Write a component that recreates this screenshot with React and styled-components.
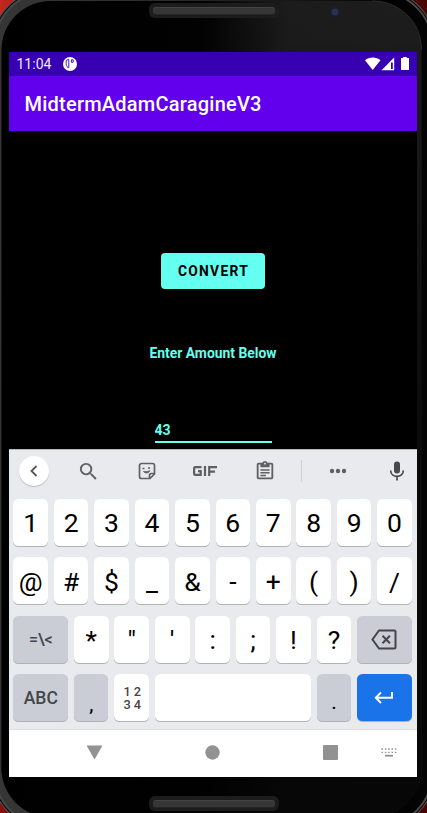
import React from "react";
import styled, { createGlobalStyle } from "styled-components";

const Global = createGlobalStyle`
  *{box-sizing:border-box}
  body{margin:0;background:#000;overflow:hidden}
  button,input{font-family:inherit;border:0;padding:0;margin:0;outline:0}
`;
const Desktop = styled.div`
  position:relative;width:427px;height:813px;overflow:hidden;
  font-family:Roboto,sans-serif;
  background:linear-gradient(100deg,#c5281f 0,#a51813 30px,#4a0505 350px,#4a0303 100%);
`;
const Body = styled.svg`position:absolute;inset:0;width:427px;height:813px;`;
const Phone = styled.div`
  position:relative;display:flex;flex-direction:column;align-items:center;
  width:427px;height:813px;padding-right:1px;
`;
const Speaker = styled.div`
  flex:none;width:130px;height:15px;border-radius:6px;background:#1c1c1c;padding:4px;
  margin-top:${p => p.$top}px;margin-left:2px;
  &::before{content:"";display:block;height:6px;border-radius:3px;background:#363636;border-top:1px solid #444;border-bottom:1px solid #252525}
`;
const Screen = styled.main`
  flex:none;width:408px;height:725px;margin-top:34px;display:flex;flex-direction:column;background:#000;
`;
const StatusBar = styled.div`
  height:23.5px;flex:none;background:#3700b3;color:#fff;display:flex;align-items:center;padding:0 7px 0 7.5px;font-size:14px;
  svg{display:block;flex:none}
`;
const Clock = styled.span`width:46px;color:#eee8fa;position:relative;top:.5px;`;
const StatusIcons = styled.div`display:flex;align-items:center;margin-left:auto;`;
const AppBar = styled.header`
  height:55.5px;flex:none;background:#6200ee;color:#fff;display:flex;align-items:center;padding:2px 0 0 15.5px;
  font-size:20px;font-weight:500;letter-spacing:.23px;
`;
const Content = styled.section`
  height:318px;flex:none;display:flex;flex-direction:column;align-items:center;color:#64ffef;
`;
const Convert = styled.button`
  margin-top:121.5px;width:104px;height:36.5px;border-radius:4px;background:#64fff0;color:#000;
  font-size:13.8px;font-weight:700;letter-spacing:1.3px;padding:0 0 0 1px;
`;
const Label = styled.label`margin-top:54.5px;height:18px;line-height:18px;font-size:13.9px;font-weight:700;`;
const Field = styled.input`
  margin:57.5px 0 0 0;width:117px;height:24px;background:transparent;color:#64ffef;
  border-bottom:2.5px solid #64ffef;font-size:14px;font-weight:700;padding-bottom:0;
`;
const Keyboard = styled.section`
  height:281px;flex:none;background:#e8eaed;border-top:1px solid #b8b9bb;border-bottom:1px solid #dcdee1;color:#000;
`;
const Toolbar = styled.div`
  height:49px;display:grid;grid-template-columns:49px 60px 58px 57px 63px 10px 63px 56px;align-items:center;justify-items:center;color:#5f6061;
  padding-bottom:7px;
  svg{display:block}
`;
const Back = styled.button`
  width:30px;height:30px;border-radius:50%;background:#fff;color:#555;display:grid;place-items:center;box-shadow:0 1px 1px #b8babd;
`;
const Divider = styled.i`width:1px;height:22px;background:#cfd1d4;`;
const Row = styled.div`
  display:flex;gap:5.8px;padding:0 5.2px 0 4.4px;height:47px;margin-bottom:11.4px;
`;
const fills = { plain: "#fff", mod: "#cacdd5", enter: "#1a73e8" };
const Key = styled.button`
  flex:${p => p.$w ? `0 0 ${p.$w}px` : "1 1 0"};min-width:0;height:47px;border-radius:5.5px;
  background:${p => fills[p.$kind || "plain"]};
  color:${p => p.$kind === "enter" ? "#fff" : p.$muted ? "#444548" : "#000"};
  box-shadow:0 1px 0 #b0b2b6;
  font-size:${p => p.$size || 26.5}px;font-weight:${p => p.$muted ? 500 : 400};
  display:flex;align-items:center;justify-content:center;line-height:1;
  padding-top:${p => p.$drop || 2}px;
  svg{display:block;margin-top:-1px}
`;
const NumPad = styled.span`
  display:grid;grid-template-columns:10.5px 10px;line-height:13px;font-size:12.8px;margin:-2px 0 0 1px;
`;
const NavBar = styled.nav`
  flex:1;background:#fff;color:#929292;display:grid;grid-template-columns:171px 65px 171px;align-items:center;padding-bottom:2px;
`;
const NavSlot = styled.div`display:flex;width:100%;align-items:center;padding-left:${p => p.$left}px;gap:${p => p.$gap || 0}px;svg{display:block;flex:none}`;

const Frame = () => (
  <Body viewBox="0 0 427 813">
    <defs>
      <linearGradient id="face" x1="0" x2="1">
        <stop offset="0" stopColor="#000" /><stop offset=".48" stopColor="#020202" />
        <stop offset=".68" stopColor="#1c1c1c" /><stop offset="1" stopColor="#1d1d1d" />
      </linearGradient>
      <linearGradient id="fade" x1="0" y1="0" x2="0" y2="1">
        <stop offset="0" stopColor="#000" stopOpacity="0" /><stop offset=".15" stopColor="#000" stopOpacity=".15" />
        <stop offset=".55" stopColor="#000" stopOpacity=".65" /><stop offset="1" stopColor="#000" stopOpacity=".75" />
      </linearGradient>
      <linearGradient id="rim" x1="0" x2="1">
        <stop offset="0" stopColor="#363636" /><stop offset=".3" stopColor="#303030" />
        <stop offset=".7" stopColor="#161616" /><stop offset=".9" stopColor="#020202" /><stop offset="1" stopColor="#050505" />
      </linearGradient>
    </defs>
    <rect x="-9" y="-12" width="445" height="842" rx="59" fill="#555" />
    <rect x="-8" y="-11" width="443" height="840" rx="58" fill="#080808" />
    <rect x="-7" y="-10" width="441" height="838" rx="57" fill="#484848" />
    <rect x="-5" y="-8" width="437" height="834" rx="55" fill="url(#rim)" />
    <rect x="1.500" y="1" width="420" height="816" rx="49" fill="url(#face)" />
    <rect x="1.500" y="1" width="420" height="816" rx="49" fill="url(#fade)" />
    <path d="M372 1C400 1 421.500 22 421.500 50" fill="none" stroke="#333" strokeWidth=".8" />
    <circle cx="335" cy="12" r="6" fill="#1b1d27" /><circle cx="335" cy="12" r="3.500" fill="#2a3150" />
  </Body>
);

const Glyph = ({ s = 20, d }) => <svg width={s} height={s} viewBox="0 0 24 24" fill="currentColor"><path d={d} /></svg>;

export default function App() {
  return (
    <Desktop>
      <Global />
      <Frame />
      <Phone>
        <Speaker $top={3} />
        <Screen>
          <StatusBar>
            <Clock>11:04</Clock>
            <svg width="14" height="14" viewBox="0 0 14 14"><circle cx="7" cy="7" r="7" fill="#fff" /><path d="M5.800 2.500v8.300C3 10.500 2.600 5 3.600 3ZM8.500 2.800h1.700v2.500H8.500Z" fill="none" stroke="#3700b3" strokeWidth=".9" /></svg>
            <StatusIcons>
              <svg width="45" height="14" viewBox="0 0 45 14" fill="#fff">
                <path d="M0 3.200C4-.5 11.500-.5 15.500 3.200L7.700 13Z" />
                <path d="M16.500 13.200 29.200.5v12.700Z" /><path d="M26 5.500h1.800v6.500H26Z" fill="#3700b3" />
                <path d="M38.200 0h3.600v1H44v12h-8V1h2.200Z" />
              </svg>
            </StatusIcons>
          </StatusBar>
          <AppBar>MidtermAdamCaragineV3</AppBar>
          <Content>
            <Convert>CONVERT</Convert>
            <Label htmlFor="amount">Enter Amount Below</Label>
            <Field id="amount" defaultValue="43" />
          </Content>
          <Keyboard>
            <Toolbar>
              <Back><svg width="10" height="12" viewBox="0 0 10 12" fill="none" stroke="currentColor" strokeWidth="1.800"><path d="M7.500 1 2.500 6l5 5" /></svg></Back>
              <Glyph s={23} d="M15.500 14h-.79l-.28-.27A6.470 6.470 0 0 0 16 9.500 6.500 6.500 0 1 0 9.500 16c1.610 0 3.090-.59 4.230-1.570l.27.28v.79l5 4.990L20.490 19zm-6 0C7.010 14 5 11.990 5 9.500S7.010 5 9.500 5 14 7.010 14 9.500 11.990 14 9.500 14" />
              <svg width="18" height="18" viewBox="0 0 18 18" fill="none" stroke="currentColor" strokeWidth="1.700"><path d="M3.500 1.500h11a2 2 0 0 1 2 2v8.500l-4.500 4.500H3.500a2 2 0 0 1-2-2v-11a2 2 0 0 1 2-2ZM16 11.500h-2.500a2 2 0 0 0-2 2V16" /><path d="M5.500 9.500c1.500 2.200 5.200 2 6.500-.8-2 .8-4 1-6.500.8Z" fill="currentColor" strokeWidth=".8" /><path d="M4.500 6.500h2M10 6h2" /></svg>
              <svg width="24" height="10" viewBox="0 0 24 10" fill="none" stroke="currentColor" strokeWidth="2.200"><path d="M8.500 1.100H2.300Q1.100 1.100 1.100 2.300v5.400Q1.100 8.900 2.300 8.900H7.700V5.200H5M12 0v10M16.200 10V1.100H24M16.200 5.600H22" /></svg>
              <Glyph s={22} d="M19 3h-4.180C14.400 1.840 13.300 1 12 1s-2.400.84-2.820 2H5c-1.100 0-2 .9-2 2v14c0 1.100.9 2 2 2h14c1.100 0 2-.9 2-2V5c0-1.100-.9-2-2-2m-7 0c.55 0 1 .45 1 1s-.45 1-1 1-1-.45-1-1 .45-1 1-1m7 16H5V5h2v3h10V5h2zM7 10h10v1.800H7zm0 3h10v1.800H7zm0 3h6v1.800H7z" />
              <Divider />
              <svg width="18" height="6" viewBox="0 0 18 6" fill="currentColor"><circle cx="3" cy="3" r="2.200" /><circle cx="9" cy="3" r="2.200" /><circle cx="15" cy="3" r="2.200" /></svg>
              <svg width="16" height="20" viewBox="0 0 16 20" color="#47484a"><rect x="5" y=".5" width="6" height="12" rx="3" fill="currentColor" /><path d="M1.700 9.500c0 4 3 5.800 6.300 5.800s6.300-1.800 6.300-5.800M8 15v4.500" fill="none" stroke="currentColor" strokeWidth="1.700" /></svg>
            </Toolbar>
            <Row>{[..."1234567890"].map(k => <Key key={k}>{k}</Key>)}</Row>
            <Row>{[..."@#$_&-+()/"].map(k => <Key key={k}>{k}</Key>)}</Row>
            <Row>
              <Key $w={54.800} $kind="mod" $muted $size={16} $drop={1}>=\&lt;</Key>
              {[..."*\"':;!?"].map(k => <Key key={k}>{k}</Key>)}
              <Key $w={54.800} $kind="mod" $muted aria-label="Delete">
                <svg width="26" height="21" viewBox="0 0 26 21" fill="none" stroke="currentColor" strokeWidth="2"><path d="M8 1.500h15.500a1 1 0 0 1 1 1v16a1 1 0 0 1-1 1H8L1.500 10.500ZM11.500 6.800l7.400 7.400M18.900 6.800l-7.400 7.400" /></svg>
              </Key>
            </Row>
            <Row>
              <Key $w={54.800} $kind="mod" $muted $size={17.500}>ABC</Key>
              <Key $w={34.500} $kind="mod" $size={21} $drop={14}>,</Key>
              <Key $w={34.500} $muted><NumPad><span>1</span><span>2</span><span>3</span><span>4</span></NumPad></Key>
              <Key aria-label="Space" />
              <Key $w={34.500} $kind="mod" $size={21} $drop={10}>.</Key>
              <Key $w={54.800} $kind="enter" aria-label="Enter"><svg width="20" height="14" viewBox="0 0 20 14" fill="none" stroke="currentColor" strokeWidth="1.900"><path d="M18 1v5.700H2M7 1.500 1.800 6.700 7 12" /></svg></Key>
            </Row>
          </Keyboard>
          <NavBar>
            <NavSlot $left={77}><svg width="17" height="15" viewBox="0 0 17 15" fill="currentColor"><path d="M.5.500h16L8.500 14.500Z" /></svg></NavSlot>
            <NavSlot $left={25}><svg width="15" height="15" viewBox="0 0 15 15" fill="currentColor"><circle cx="7.500" cy="7.500" r="7.200" /></svg></NavSlot>
            <NavSlot $left={78} $gap={43}>
              <svg width="15" height="15" viewBox="0 0 15 15" fill="currentColor"><rect width="15" height="15" rx="1" /></svg>
              <svg width="16" height="9" viewBox="0 0 16 9" stroke="currentColor" strokeWidth="1.300"><path d="M.5 1h15M.5 4.300h15" strokeDasharray="1.500 1.850" /><path d="M4 7.700h8" strokeWidth="1.800" /></svg>
            </NavSlot>
          </NavBar>
        </Screen>
        <Speaker $top={19} />
      </Phone>
    </Desktop>
  );
}
